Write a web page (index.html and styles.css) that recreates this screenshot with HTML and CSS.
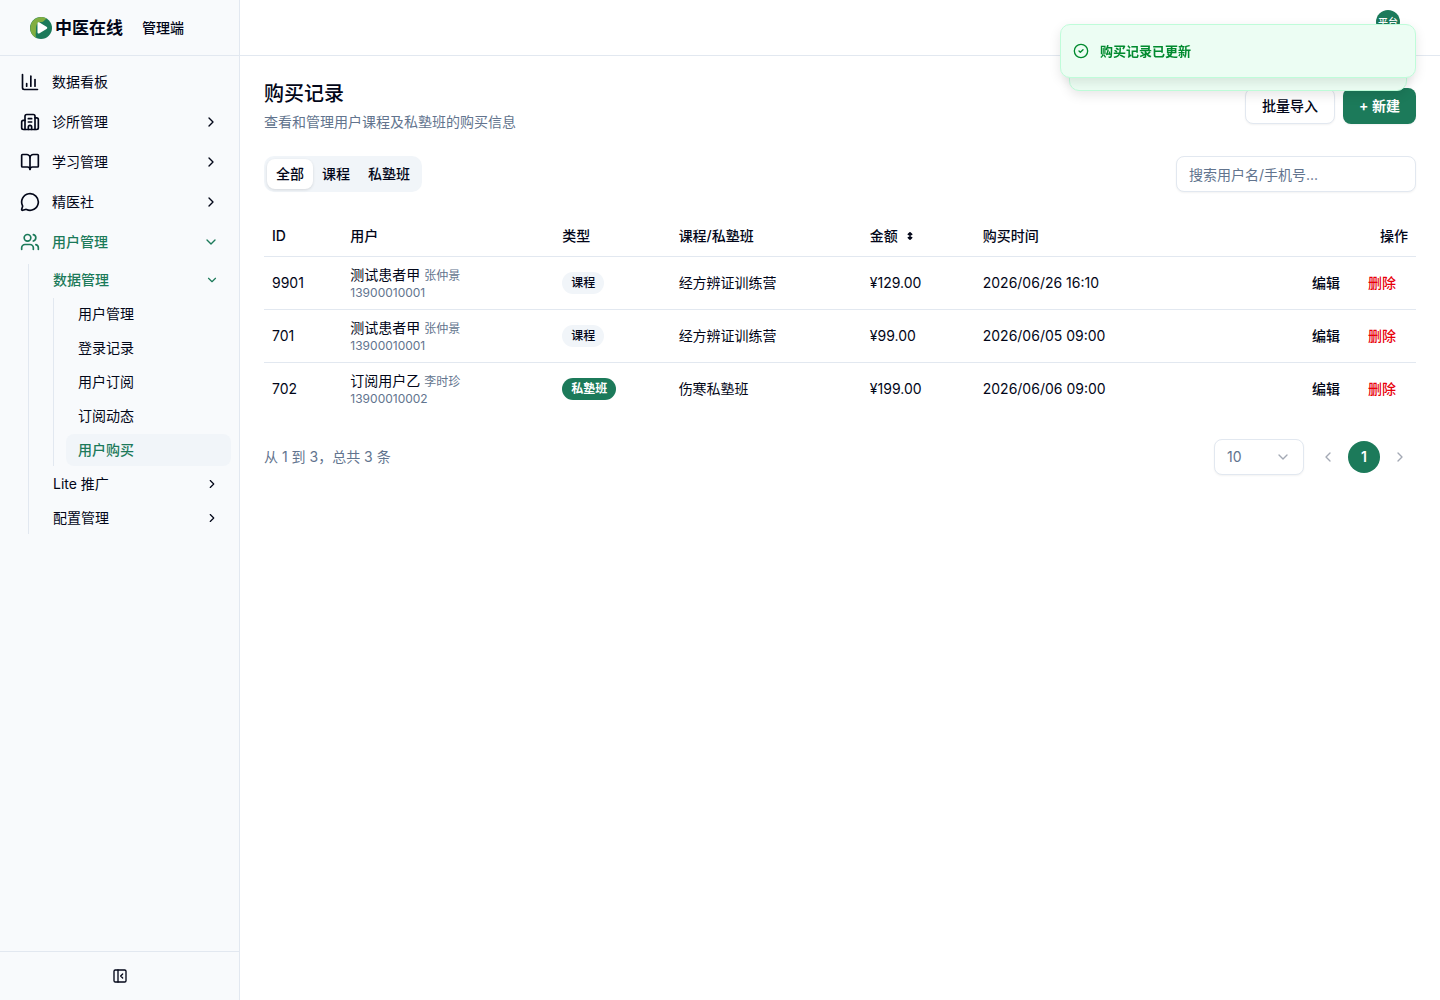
FILE: index.html
```
<!DOCTYPE html>
<html lang="zh-CN">
<head>
    <meta charset="UTF-8" />
    <meta name="viewport" content="width=device-width, initial-scale=1" />
    <title>购买记录 - 中医在线管理端</title>
    <link rel="stylesheet" href="styles.css">
</head>
<body>
    <!-- shared chevron shapes -->
    <svg class="sprite" aria-hidden="true">
        <symbol id="chevron-right" viewBox="0 0 24 24"><path d="m9 18 6-6-6-6" /></symbol>
        <symbol id="chevron-left" viewBox="0 0 24 24"><path d="m15 18-6-6 6-6" /></symbol>
        <symbol id="chevron-down" viewBox="0 0 24 24"><path d="m6 9 6 6 6-6" /></symbol>
    </svg>

    <div class="layout">
        <aside class="sidebar">
            <div class="brand">
                <svg class="brand-logo" viewBox="0 0 22 22" aria-hidden="true">
                    <circle cx="11" cy="11" r="11" fill="#1c7a5a" />
                    <path d="M6.500 21A11 11 0 1 1 17 1.700C14 2 15 5 11 5 6.500 5 6 9 6 13c0 4-1 5 .5 8z" fill="#80ae41" />
                    <path d="M7.500 6.500c0-1.200 1-1.600 2-1l7 4.200c1 .6 1 1.700 0 2.300l-7 4.300c-1 .6-2 .2-2-1z" fill="#fff" />
                </svg>
                <span class="brand-name">中医在线</span>
                <span class="brand-role">管理端</span>
            </div>

            <nav class="menu">
                <a class="menu-item" href="#">
                    <svg class="icon" viewBox="0 0 24 24"><path d="M3 3v16a2 2 0 0 0 2 2h16" /><path d="M18 17V9" /><path d="M13 17V5" /><path d="M8 17v-3" /></svg>
                    <span>数据看板</span>
                </a>
                <button class="menu-item" type="button">
                    <svg class="icon" viewBox="0 0 24 24"><path d="M10 12h4" /><path d="M10 8h4" /><path d="M14 21v-3a2 2 0 0 0-4 0v3" /><path d="M6 10H4a2 2 0 0 0-2 2v7a2 2 0 0 0 2 2h16a2 2 0 0 0 2-2V9a2 2 0 0 0-2-2h-2" /><path d="M6 21V5a2 2 0 0 1 2-2h8a2 2 0 0 1 2 2v16" /></svg>
                    <span>诊所管理</span>
                    <svg class="arrow"><use href="#chevron-right" /></svg>
                </button>
                <button class="menu-item" type="button">
                    <svg class="icon" viewBox="0 0 24 24"><path d="M12 7v14" /><path d="M3 18a1 1 0 0 1-1-1V4a1 1 0 0 1 1-1h5a4 4 0 0 1 4 4 4 4 0 0 1 4-4h5a1 1 0 0 1 1 1v13a1 1 0 0 1-1 1h-6a3 3 0 0 0-3 3 3 3 0 0 0-3-3z" /></svg>
                    <span>学习管理</span>
                    <svg class="arrow"><use href="#chevron-right" /></svg>
                </button>
                <button class="menu-item" type="button">
                    <svg class="icon" viewBox="0 0 24 24"><path d="M2.992 16.342a2 2 0 0 1 .094 1.167l-1.065 3.290a1 1 0 0 0 1.236 1.168l3.413-.998a2 2 0 0 1 1.099.092 10 10 0 1 0-4.777-4.719" /></svg>
                    <span>精医社</span>
                    <svg class="arrow"><use href="#chevron-right" /></svg>
                </button>
                <button class="menu-item open" type="button" aria-expanded="true">
                    <svg class="icon" viewBox="0 0 24 24"><path d="M16 21v-2a4 4 0 0 0-4-4H6a4 4 0 0 0-4 4v2" /><path d="M16 3.128a4 4 0 0 1 0 7.744" /><path d="M22 21v-2a4 4 0 0 0-3-3.870" /><circle cx="9" cy="7" r="4" /></svg>
                    <span>用户管理</span>
                    <svg class="arrow"><use href="#chevron-down" /></svg>
                </button>
                <div class="submenu">
                    <button class="sub-item open" type="button" aria-expanded="true">
                        <span>数据管理</span>
                        <svg class="arrow"><use href="#chevron-down" /></svg>
                    </button>
                    <div class="submenu nested">
                        <a class="sub-item" href="#">用户管理</a>
                        <a class="sub-item" href="#">登录记录</a>
                        <a class="sub-item" href="#">用户订阅</a>
                        <a class="sub-item" href="#">订阅动态</a>
                        <a class="sub-item active" href="#" aria-current="page">用户购买</a>
                    </div>
                    <button class="sub-item" type="button">
                        <span>Lite 推广</span>
                        <svg class="arrow"><use href="#chevron-right" /></svg>
                    </button>
                    <button class="sub-item" type="button">
                        <span>配置管理</span>
                        <svg class="arrow"><use href="#chevron-right" /></svg>
                    </button>
                </div>
            </nav>

            <div class="sidebar-footer">
                <button class="collapse" type="button" aria-label="收起侧边栏">
                    <svg viewBox="0 0 24 24"><rect width="18" height="18" x="3" y="3" rx="2" /><path d="M9 3v18" /><path d="m16 15-3-3 3-3" /></svg>
                </button>
            </div>
        </aside>

        <div class="page">
            <header class="topbar">
                <button class="avatar" type="button">平台</button>
            </header>

            <main class="content">
                <div class="page-head">
                    <div>
                        <h1>购买记录</h1>
                        <p>查看和管理用户课程及私塾班的购买信息</p>
                    </div>
                    <div class="head-actions">
                        <button class="btn" type="button">批量导入</button>
                        <button class="btn primary" type="button">+ 新建</button>
                    </div>
                </div>

                <div class="toolbar">
                    <div class="tabs" role="tablist">
                        <button class="tab active" type="button" role="tab" aria-selected="true">全部</button>
                        <button class="tab" type="button" role="tab">课程</button>
                        <button class="tab" type="button" role="tab">私塾班</button>
                    </div>
                    <input class="search" type="text" placeholder="搜索用户名/手机号..." aria-label="搜索用户名/手机号" />
                </div>

                <table>
                    <thead>
                        <tr>
                            <th class="col-id">ID</th>
                            <th class="col-user">用户</th>
                            <th class="col-type">类型</th>
                            <th class="col-course">课程/私塾班</th>
                            <th class="col-amount"><button class="sort" type="button">金额 <svg viewBox="0 0 6 10" aria-hidden="true"><path d="M3 1v8M1 3l2-2 2 2M1 7l2 2 2-2" /></svg></button></th>
                            <th>购买时间</th>
                            <th class="ops">操作</th>
                        </tr>
                    </thead>
                    <tbody>
                        <tr>
                            <td>9901</td>
                            <td><div class="user">测试患者甲 <small>张仲景</small></div><div class="phone">13900010001</div></td>
                            <td><span class="badge">课程</span></td>
                            <td>经方辨证训练营</td>
                            <td>¥129.00</td>
                            <td>2026/06/26 16:10</td>
                            <td class="ops"><div class="row-actions"><button class="link" type="button">编辑</button><button class="link danger" type="button">删除</button></div></td>
                        </tr>
                        <tr>
                            <td>701</td>
                            <td><div class="user">测试患者甲 <small>张仲景</small></div><div class="phone">13900010001</div></td>
                            <td><span class="badge">课程</span></td>
                            <td>经方辨证训练营</td>
                            <td>¥99.00</td>
                            <td>2026/06/05 09:00</td>
                            <td class="ops"><div class="row-actions"><button class="link" type="button">编辑</button><button class="link danger" type="button">删除</button></div></td>
                        </tr>
                        <tr>
                            <td>702</td>
                            <td><div class="user">订阅用户乙 <small>李时珍</small></div><div class="phone">13900010002</div></td>
                            <td><span class="badge solid">私塾班</span></td>
                            <td>伤寒私塾班</td>
                            <td>¥199.00</td>
                            <td>2026/06/06 09:00</td>
                            <td class="ops"><div class="row-actions"><button class="link" type="button">编辑</button><button class="link danger" type="button">删除</button></div></td>
                        </tr>
                    </tbody>
                </table>

                <div class="table-footer">
                    <span class="total">从 1 到 3，总共 3 条</span>
                    <div class="pager">
                        <div class="page-size">
                            <select aria-label="每页条数">
                                <option>10</option>
                                <option>20</option>
                                <option>50</option>
                            </select>
                            <svg><use href="#chevron-down" /></svg>
                        </div>
                        <button class="page-btn" type="button" aria-label="上一页" disabled><svg><use href="#chevron-left" /></svg></button>
                        <button class="page-btn current" type="button" aria-current="page">1</button>
                        <button class="page-btn" type="button" aria-label="下一页" disabled><svg><use href="#chevron-right" /></svg></button>
                    </div>
                </div>
            </main>
        </div>
    </div>

    <div class="toaster" role="status">
        <div class="toast-back"></div>
        <div class="toast">
            <svg viewBox="0 0 24 24"><circle cx="12" cy="12" r="10" /><path d="m9 12 2 2 4-4" /></svg>
            <span>购买记录已更新</span>
        </div>
    </div>
</body>
</html>
```
FILE: styles.css
```
:root {
    --text: #020618;
    --muted: #62748e;
    --border: #e2e8f0;
    --soft: #f1f5f9;
    --primary: #1c7a5a;
}

* {
    box-sizing: border-box;
}

body {
    margin: 0;
    color: var(--text);
    background: #fff;
    font-family: Inter, "Noto Sans CJK SC", sans-serif;
    font-size: 14px;
    line-height: 20px;
}

button, input, select {
    font: inherit;
    color: inherit;
}

button {
    padding: 0;
    border: 0;
    background: none;
    cursor: pointer;
}

a {
    color: inherit;
    text-decoration: none;
}

svg {
    flex-shrink: 0;
    fill: none;
    stroke: currentColor;
    stroke-width: 2;
    stroke-linecap: round;
    stroke-linejoin: round;
}

.sprite {
    display: none;
}

.layout {
    display: flex;
    min-height: 100vh;
}

/* Sidebar */
.sidebar {
    display: flex;
    flex-direction: column;
    flex: 0 0 240px;
    background: #f8fafc;
    border-right: 1px solid var(--border);
}

.brand {
    display: flex;
    align-items: center;
    height: 56px;
    padding-left: 30px;
    border-bottom: 1px solid var(--border);
}

.brand-logo {
    width: 22px;
    height: 22px;
    margin-right: 3px;
    stroke: none;
}

.brand-name {
    font-size: 17px;
    font-weight: 600;
}

.brand-role {
    margin-left: 19px;
    font-weight: 500;
}

.menu {
    display: flex;
    flex-direction: column;
    flex: 1;
    gap: 4px;
    padding: 8px;
}

.menu-item {
    display: flex;
    align-items: center;
    gap: 12px;
    height: 36px;
    padding: 0 12px;
    border-radius: 8px;
}

.icon {
    width: 20px;
    height: 20px;
}

.arrow {
    width: 16px;
    height: 16px;
    margin-left: auto;
}

.submenu {
    display: flex;
    flex-direction: column;
    gap: 2px;
    margin-left: 20px;
    padding-left: 12px;
    border-left: 1px solid var(--border);
}

.submenu.nested {
    margin-left: 12px;
}

.sub-item {
    display: flex;
    align-items: center;
    height: 32px;
    padding: 0 12px;
    border-radius: 8px;
}

.sub-item .arrow {
    width: 14px;
    height: 14px;
}

.open, .sub-item.active {
    color: var(--primary);
    font-weight: 500;
}

.sub-item.active {
    background: var(--soft);
}

.sidebar-footer {
    display: flex;
    justify-content: center;
    padding: 8px;
    border-top: 1px solid var(--border);
}

.collapse {
    display: flex;
    align-items: center;
    justify-content: center;
    width: 32px;
    height: 32px;
}

.collapse svg {
    width: 16px;
    height: 16px;
}

/* Main column */
.page {
    flex: 1;
    min-width: 0;
}

.topbar {
    display: flex;
    justify-content: flex-end;
    align-items: flex-start;
    height: 56px;
    padding: 10px 40px;
    border-bottom: 1px solid var(--border);
}

.avatar {
    width: 24px;
    height: 24px;
    border-radius: 50%;
    background: var(--primary);
    color: #fff;
    font-size: 10px;
    font-weight: 500;
    line-height: 24px;
}

.content {
    display: flex;
    flex-direction: column;
    gap: 24px;
    padding: 24px;
}

.page-head, .toolbar, .table-footer {
    display: flex;
    align-items: center;
    justify-content: space-between;
}

h1 {
    margin: 0 0 4px;
    font-size: 20px;
    line-height: 28px;
    font-weight: 500;
}

.page-head p {
    margin: 0;
    color: var(--muted);
}

.head-actions {
    display: flex;
    gap: 8px;
}

.btn {
    height: 36px;
    padding: 0 16px;
    border: 1px solid var(--border);
    border-radius: 8px;
    background: #fff;
    font-weight: 500;
    box-shadow: 0 1px 2px rgba(0, 0, 0, 0.05);
}

.btn.primary {
    border: 0;
    background: var(--primary);
    color: #fff;
    font-weight: 600;
}

.tabs {
    display: flex;
    height: 36px;
    padding: 3px;
    border-radius: 10px;
    background: var(--soft);
}

.tab {
    padding: 0 9px;
    border-radius: 8px;
    font-weight: 500;
}

.tab.active {
    background: #fff;
    box-shadow: 0 1px 3px rgba(0, 0, 0, 0.12);
}

.search {
    width: 240px;
    height: 36px;
    padding: 0 12px;
    border: 1px solid var(--border);
    border-radius: 8px;
    box-shadow: 0 1px 2px rgba(0, 0, 0, 0.05);
}

.search::placeholder {
    color: var(--muted);
}

/* Records table */
table {
    width: 100%;
    table-layout: fixed;
    border-collapse: collapse;
}

th, td {
    padding: 8px;
    text-align: left;
    white-space: nowrap;
}

th {
    padding: 10px 8px;
    font-weight: 500;
}

thead tr, tbody tr:not(:last-child) {
    border-bottom: 1px solid var(--border);
}

.col-id { width: 6.8%; }
.col-user { width: 18.4%; }
.col-type { width: 10.1%; }
.col-course { width: 16.6%; }
.col-amount { width: 9.8%; }

th.ops {
    text-align: right;
}

.sort {
    display: flex;
    align-items: center;
    gap: 9px;
    font-weight: 500;
}

.sort svg {
    width: 6px;
    height: 8px;
    stroke-width: 2;
}

.user small {
    color: var(--muted);
    font-size: 12px;
}

.user {
    height: 20px;
}

.phone {
    color: var(--muted);
    font-size: 12px;
    line-height: 16px;
}

.badge {
    display: inline-block;
    padding: 3px 9px;
    border-radius: 11px;
    background: var(--soft);
    font-size: 12px;
    line-height: 16px;
    font-weight: 500;
    vertical-align: middle;
}

.badge.solid {
    background: var(--primary);
    color: #fff;
    font-weight: 600;
}

.row-actions {
    display: flex;
    justify-content: flex-end;
    gap: 4px;
}

.link {
    height: 32px;
    padding: 0 12px;
    font-weight: 500;
}

.link.danger {
    color: #e7000b;
}

/* Pagination */
.total {
    color: var(--muted);
}

.pager {
    display: flex;
    align-items: center;
    gap: 4px;
}

.page-size {
    position: relative;
    margin-right: 4px;
}

.page-size select {
    appearance: none;
    width: 90px;
    height: 36px;
    padding: 0 12px;
    border: 1px solid var(--border);
    border-radius: 8px;
    background: #fff;
    color: var(--muted);
    box-shadow: 0 1px 2px rgba(0, 0, 0, 0.05);
}

.page-size svg {
    position: absolute;
    top: 10px;
    right: 13px;
    width: 16px;
    height: 16px;
    color: #a3a9b4;
    pointer-events: none;
}

.page-btn {
    display: flex;
    align-items: center;
    justify-content: center;
    width: 32px;
    height: 32px;
    border-radius: 50%;
    font-weight: 600;
}

.page-btn svg {
    width: 16px;
    height: 16px;
    color: #a3a9b4;
}

.page-btn.current {
    background: var(--primary);
    color: #fff;
}

/* Toasts, newest on top of the older one */
.toaster {
    position: fixed;
    top: 24px;
    right: 24px;
    width: 356px;
}

.toast, .toast-back {
    border: 1px solid #bffcd9;
    border-radius: 10px;
    background: #ecfdf3;
    box-shadow: 0 4px 12px rgba(0, 0, 0, 0.1);
}

.toast {
    position: relative;
    display: flex;
    align-items: center;
    gap: 11px;
    height: 54px;
    padding: 0 12px;
    color: #008a2e;
    font-size: 13px;
    font-weight: 600;
}

.toast svg {
    width: 16px;
    height: 16px;
}

.toast-back {
    position: absolute;
    inset: 14px 9px -13px;
}
```
